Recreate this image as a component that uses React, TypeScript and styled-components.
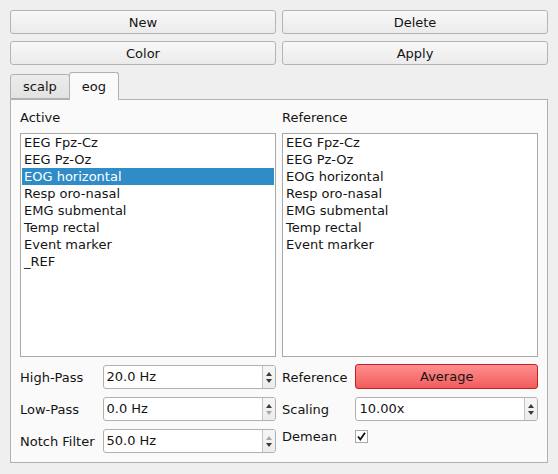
import styled, { createGlobalStyle } from 'styled-components';

const GlobalStyle = createGlobalStyle`
  html, body {
    margin: 0;
    padding: 0;
    background: #efefef;
  }
  body {
    font-family: 'DejaVu Sans', 'Liberation Sans', sans-serif;
    font-size: 13px;
    color: #141414;
  }
`;

// Layout
const Window = styled.div`
  box-sizing: border-box;
  height: 100vh;
  padding: 10px 10px 11px;
  display: flex;
  flex-direction: column;
`;

const ButtonGrid = styled.div`
  display: grid;
  grid-template-columns: 1fr 1fr;
  column-gap: 6px;
  row-gap: 7px;
`;

const PushButton = styled.button`
  box-sizing: border-box;
  height: 24px;
  font-family: inherit;
  font-size: 13px;
  color: #141414;
  background: linear-gradient(#f8f8f8, #ebebeb);
  border: 1px solid #b4b4b4;
  border-radius: 3px;
  padding: 0;
`;

const TabBar = styled.div`
  display: flex;
  align-items: flex-end;
  margin-top: 7px;
  height: 27px;
  position: relative;
  z-index: 1;
`;

const Tab = styled.div<{ $active?: boolean }>`
  box-sizing: border-box;
  height: ${(p) => (p.$active ? '28px' : '25px')};
  margin-bottom: ${(p) => (p.$active ? '-1px' : '0')};
  padding: 0 12px;
  display: flex;
  align-items: center;
  border: 1px solid #b0b0b0;
  border-bottom: ${(p) => (p.$active ? 'none' : '1px solid #b0b0b0')};
  border-radius: 3px 3px 0 0;
  background: ${(p) => (p.$active ? '#fafafa' : 'linear-gradient(#ececec, #e2e2e2)')};
  margin-left: ${(p) => (p.$active ? '-1px' : '0')};
`;

const Pane = styled.div`
  flex: 1;
  box-sizing: border-box;
  background: #fafafa;
  border: 1px solid #b0b0b0;
  padding: 9px;
  display: grid;
  grid-template-columns: 1fr 1fr;
  grid-template-rows: 18px 1fr auto;
  column-gap: 6px;
  row-gap: 6px;
`;

const ColumnLabel = styled.div`
  line-height: 18px;
`;

const ListBox = styled.div`
  box-sizing: border-box;
  background: #fff;
  border: 1px solid #a8a8a8;
  padding: 0 1px 1px;
`;

const ListItem = styled.div<{ $selected?: boolean }>`
  height: 17px;
  line-height: 17px;
  padding: 0 2px;
  white-space: nowrap;
  background: ${(p) => (p.$selected ? '#308cc6' : 'transparent')};
  color: ${(p) => (p.$selected ? '#ffffff' : 'inherit')};
`;

const FormGrid = styled.div`
  margin-top: 2px;
  display: grid;
  grid-template-columns: auto 1fr;
  column-gap: 8px;
  row-gap: 8px;
  align-items: center;
  align-content: start;
`;

const SpinBox = styled.div`
  box-sizing: border-box;
  height: 24px;
  display: flex;
  background: #fff;
  border: 1px solid #b0b0b0;
  border-radius: 3px;
  overflow: hidden;
`;

const SpinValue = styled.div`
  flex: 1;
  padding-left: 3px;
  line-height: 22px;
`;

const SpinButtons = styled.div`
  width: 12px;
  border-left: 1px solid #c4c4c4;
  background: linear-gradient(#f6f6f6, #ececec);
  display: flex;
  flex-direction: column;
  align-items: center;
  justify-content: center;
  gap: 3px;
`;

const Arrow = styled.div<{ $down?: boolean; $disabled?: boolean }>`
  width: 0;
  height: 0;
  border-left: 3.5px solid transparent;
  border-right: 3.5px solid transparent;
  ${(p) =>
    p.$down
      ? `border-top: 4px solid ${p.$disabled ? '#a8a8a8' : '#3a3a3a'};`
      : `border-bottom: 4px solid ${p.$disabled ? '#a8a8a8' : '#3a3a3a'};`}
`;

const RedButton = styled.button`
  box-sizing: border-box;
  height: 25px;
  margin-top: -1px;
  font-family: inherit;
  font-size: 13px;
  color: #141414;
  background: linear-gradient(#ff8f8f, #f25c5c);
  border: 1px solid #c42020;
  border-radius: 3px;
  padding: 0;
`;

const CheckRow = styled.div`
  height: 13px;
  margin-top: -1px;
  display: flex;
  align-items: center;
`;

const CheckBox = styled.div`
  box-sizing: border-box;
  width: 13px;
  height: 13px;
  background: #fff;
  border: 1px solid #a8a8a8;
  display: flex;
  align-items: center;
  justify-content: center;
`;

const channels = [
  'EEG Fpz-Cz',
  'EEG Pz-Oz',
  'EOG horizontal',
  'Resp oro-nasal',
  'EMG submental',
  'Temp rectal',
  'Event marker',
];

type SpinProps = { value: string; upDisabled?: boolean; downDisabled?: boolean };

const Spin = ({ value, upDisabled, downDisabled }: SpinProps) => (
  <SpinBox>
    <SpinValue>{value}</SpinValue>
    <SpinButtons>
      <Arrow $disabled={upDisabled} />
      <Arrow $down $disabled={downDisabled} />
    </SpinButtons>
  </SpinBox>
);

const App = () => {
  return (
    <Window>
      <GlobalStyle />
      <ButtonGrid>
        <PushButton>New</PushButton>
        <PushButton>Delete</PushButton>
        <PushButton>Color</PushButton>
        <PushButton>Apply</PushButton>
      </ButtonGrid>

      <TabBar>
        <Tab>scalp</Tab>
        <Tab $active>eog</Tab>
      </TabBar>

      <Pane>
        <ColumnLabel>Active</ColumnLabel>
        <ColumnLabel>Reference</ColumnLabel>

        <ListBox>
          {[...channels, '_REF'].map((c) => (
            <ListItem key={c} $selected={c === 'EOG horizontal'}>
              {c}
            </ListItem>
          ))}
        </ListBox>
        <ListBox>
          {channels.map((c) => (
            <ListItem key={c}>{c}</ListItem>
          ))}
        </ListBox>

        <FormGrid>
          <span>High-Pass</span>
          <Spin value="20.0 Hz" />
          <span>Low-Pass</span>
          <Spin value="0.0 Hz" downDisabled />
          <span>Notch Filter</span>
          <Spin value="50.0 Hz" upDisabled />
        </FormGrid>

        <FormGrid>
          <span>Reference</span>
          <RedButton>Average</RedButton>
          <span>Scaling</span>
          <Spin value="10.00x" />
          <span>Demean</span>
          <CheckRow>
            <CheckBox>
              <svg width="11" height="11" viewBox="0 0 11 11">
                <path d="M2 5.5 L4.3 8.5 L9 1.8" fill="none" stroke="#111" strokeWidth="1.8" />
              </svg>
            </CheckBox>
          </CheckRow>
        </FormGrid>
      </Pane>
    </Window>
  );
};

export default App;
